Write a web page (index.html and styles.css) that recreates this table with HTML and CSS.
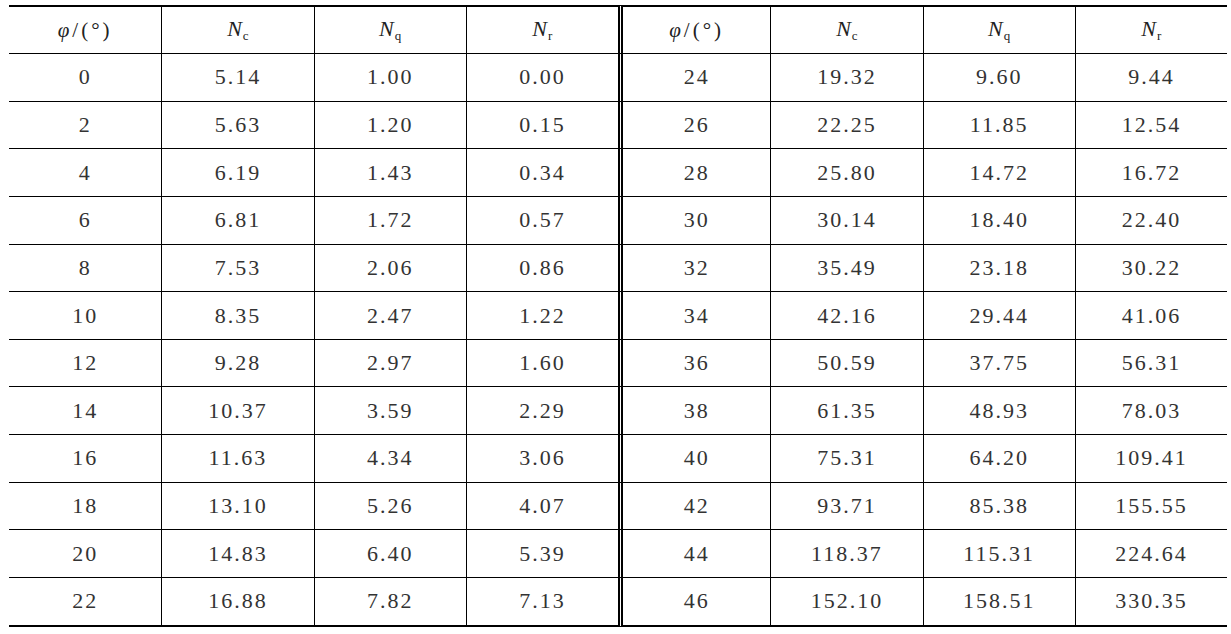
FILE: index.html
```html
<!DOCTYPE html>
<html lang="zh-CN">

<head>
    <meta charset="UTF-8">
    <meta name="viewport" content="width=device-width, initial-scale=1.0">
    <title>承载力系数表</title>
    <link rel="stylesheet" href="styles.css">
</head>

<body>
    <div class="page">
        <table class="coef">
            <thead>
                <tr>
                    <th class="phi"><i>φ</i>/(°)</th>
                    <th><i>N</i><sub>c</sub></th>
                    <th><i>N</i><sub>q</sub></th>
                    <th><i>N</i><sub>r</sub></th>
                    <th class="phi split"><i>φ</i>/(°)</th>
                    <th><i>N</i><sub>c</sub></th>
                    <th><i>N</i><sub>q</sub></th>
                    <th><i>N</i><sub>r</sub></th>
                </tr>
            </thead>
            <tbody>
                <tr><td>0</td><td>5.14</td><td>1.00</td><td>0.00</td><td class="split">24</td><td>19.32</td><td>9.60</td><td>9.44</td></tr>
                <tr><td>2</td><td>5.63</td><td>1.20</td><td>0.15</td><td class="split">26</td><td>22.25</td><td>11.85</td><td>12.54</td></tr>
                <tr><td>4</td><td>6.19</td><td>1.43</td><td>0.34</td><td class="split">28</td><td>25.80</td><td>14.72</td><td>16.72</td></tr>
                <tr><td>6</td><td>6.81</td><td>1.72</td><td>0.57</td><td class="split">30</td><td>30.14</td><td>18.40</td><td>22.40</td></tr>
                <tr><td>8</td><td>7.53</td><td>2.06</td><td>0.86</td><td class="split">32</td><td>35.49</td><td>23.18</td><td>30.22</td></tr>
                <tr><td>10</td><td>8.35</td><td>2.47</td><td>1.22</td><td class="split">34</td><td>42.16</td><td>29.44</td><td>41.06</td></tr>
                <tr><td>12</td><td>9.28</td><td>2.97</td><td>1.60</td><td class="split">36</td><td>50.59</td><td>37.75</td><td>56.31</td></tr>
                <tr><td>14</td><td>10.37</td><td>3.59</td><td>2.29</td><td class="split">38</td><td>61.35</td><td>48.93</td><td>78.03</td></tr>
                <tr><td>16</td><td>11.63</td><td>4.34</td><td>3.06</td><td class="split">40</td><td>75.31</td><td>64.20</td><td>109.41</td></tr>
                <tr><td>18</td><td>13.10</td><td>5.26</td><td>4.07</td><td class="split">42</td><td>93.71</td><td>85.38</td><td>155.55</td></tr>
                <tr><td>20</td><td>14.83</td><td>6.40</td><td>5.39</td><td class="split">44</td><td>118.37</td><td>115.31</td><td>224.64</td></tr>
                <tr><td>22</td><td>16.88</td><td>7.82</td><td>7.13</td><td class="split">46</td><td>152.10</td><td>158.51</td><td>330.35</td></tr>
            </tbody>
        </table>
    </div>
</body>

</html>
```

FILE: styles.css
```css
* {
    margin: 0;
    padding: 0;
    box-sizing: border-box;
}
body {
    background: #fff;
    font-family: "Liberation Serif", "Noto Sans CJK SC", serif;
    color: #333;
}
.page {
    padding: 5px 4px 0 9px;
}
.coef {
    width: 1218px;
    table-layout: fixed;
    border-collapse: separate;
    border-spacing: 0;
}
.coef th,
.coef td {
    text-align: center;
    vertical-align: middle;
    border-bottom: 1px solid #000;
    border-left: 1px solid #000;
    font-weight: normal;
}
.coef th:first-child,
.coef td:first-child {
    border-left: none;
}
.coef th {
    height: 49px;
    border-top: 2px solid #000;
    font-size: 22px;
    color: #222;
}
.coef td {
    height: 47.65px;
    font-size: 22px;
    letter-spacing: 2px;
}
.coef tbody tr:last-child td {
    height: 48.65px;
    border-bottom: 2px solid #000;
}
.coef .split {
    border-left: 5px double #000;
}
.coef th i {
    font-style: italic;
}
.coef th sub {
    font-size: 13px;
    vertical-align: -4px;
    margin-left: 1px;
}
.coef .phi {
    font-size: 21px;
    letter-spacing: 3px;
}
```
